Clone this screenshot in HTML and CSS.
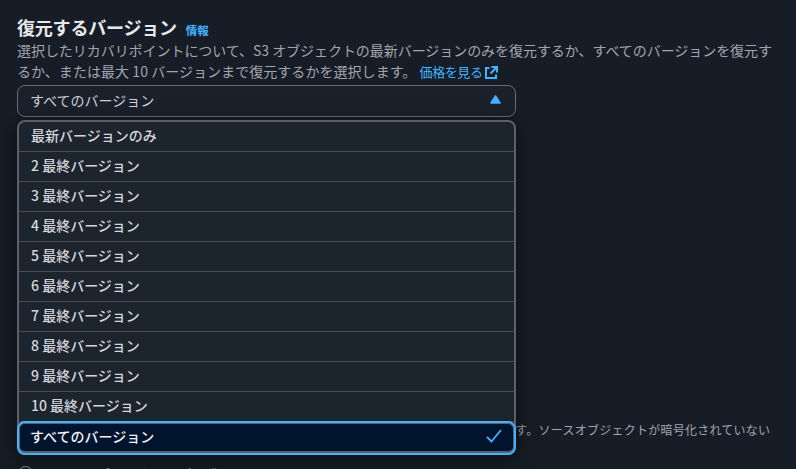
FILE: index.html
```html
<!DOCTYPE html>
<html lang="ja">
<head>
  <meta charset="UTF-8">
  <meta name="viewport" content="width=device-width, initial-scale=1.0">
  <title>復元するバージョン</title>
  <link rel="stylesheet" href="styles.css">
</head>
<body>
  <main class="field">
    <div class="field-head">
      <h2>復元するバージョン</h2>
      <a class="info" href="#">情報</a>
    </div>
    <p class="desc">
      <span class="line-one">選択したリカバリポイントについて、S3 オブジェクトの最新バージョンのみを復元するか、すべてのバージョンを復元す</span>
      <span class="line-two">るか、または最大 10 バージョンまで復元するかを選択します。</span>
      <a class="link" href="#">価格を見る<svg class="ext" width="13" height="13" viewBox="0 0 13 13" fill="none" stroke="#42b4ff" stroke-width="2"><path d="M4.5 2H1v10h10V8.5"/><path d="M6.5 1h5.5v5.5M12 1L5.5 7.5"/></svg></a>
    </p>

    <div class="select">
      <span>すべてのバージョン</span>
      <svg class="caret" width="11" height="9" viewBox="0 0 11 9" fill="#42b4ff" stroke="#42b4ff" stroke-width="1.5" stroke-linejoin="round"><path d="M5.5 1L10 8H1z"/></svg>
    </div>

    <ul class="menu">
      <li>最新バージョンのみ</li>
      <li>2 最終バージョン</li>
      <li>3 最終バージョン</li>
      <li>4 最終バージョン</li>
      <li>5 最終バージョン</li>
      <li>6 最終バージョン</li>
      <li>7 最終バージョン</li>
      <li>8 最終バージョン</li>
      <li>9 最終バージョン</li>
      <li>10 最終バージョン</li>
      <li class="selected">
        <span>すべてのバージョン</span>
        <svg width="16" height="14" viewBox="0 0 16 14" fill="none" stroke="#42b4ff" stroke-width="1.8"><path d="M1 8l4.5 4.5L15 1"/></svg>
      </li>
    </ul>

    <p class="behind">ます。ソースオブジェクトが暗号化されていない</p>
    <div class="radio"><span class="dot"></span>ソースオブジェクトの暗号化</div>
  </main>
</body>
</html>
```

FILE: styles.css
```css
html, body {
  height: 100%;
}
body {
  margin: 0;
  overflow: hidden;
  background: #161d26;
  color: #c6c6cd;
  font-family: "Noto Sans CJK JP", "Noto Sans", sans-serif;
  font-size: 14px;
}
.field {
  width: 779px;
  padding: 16px 0 0 17px;
}
.field-head {
  display: flex;
  align-items: baseline;
  gap: 9px;
}
h2 {
  margin: 0;
  font-size: 18px;
  line-height: 23px;
  font-weight: 700;
  letter-spacing: -0.2px;
  color: #e8e8ec;
}
.info {
  font-size: 11.5px;
  font-weight: 700;
  color: #42b4ff;
  text-decoration: none;
}
.desc {
  margin: 1px 0 0;
  font-size: 14px;
  line-height: 21px;
  color: #a4a4ae;
  white-space: nowrap;
}
.line-one {
  display: block;
  letter-spacing: -0.05px;
}
.line-two {
  letter-spacing: 0.05px;
}
.link {
  color: #42b4ff;
  text-decoration: none;
  font-size: 13px;
  letter-spacing: -0.4px;
}
.ext {
  margin-left: 2px;
  vertical-align: -2px;
}
.select {
  display: flex;
  justify-content: space-between;
  align-items: center;
  box-sizing: border-box;
  width: 499px;
  height: 32px;
  margin-top: 3px;
  padding: 0 14px 3px 12px;
  border: 1px solid #6b6b76;
  border-radius: 8px;
  background: #1a212b;
  color: #cfcfd5;
}
.menu {
  position: relative;
  z-index: 1;
  box-sizing: border-box;
  width: 499px;
  margin: 3px 0 0;
  padding: 0;
  list-style: none;
  background: #1c242e;
  border: 2px solid #5f5f6b;
  border-radius: 8px;
  box-shadow: 0 4px 20px rgba(0, 0, 0, 0.55);
}
.menu li {
  box-sizing: border-box;
  height: 30px;
  padding: 0 12px;
  line-height: 27px;
  color: #d5d5da;
  font-weight: 500;
  border-bottom: 1px solid #474c55;
}
.menu .selected {
  display: flex;
  justify-content: space-between;
  align-items: center;
  height: 34px;
  margin: -1px -2px -2px;
  padding: 0 12px 5px 11px;
  background: #00142e;
  border: 2px solid #42b4ff;
  border-radius: 8px;
  box-shadow: inset 0 0 0 1px #5f5f6b, inset 0 -2px 0 #5f5f6b;
  color: #f0f0f3;
  line-height: 24px;
}
.behind {
  position: absolute;
  left: 503px;
  top: 421px;
  margin: 0;
  font-size: 12px;
  letter-spacing: 0.25px;
  color: #a4a4ae;
  white-space: nowrap;
}
.radio {
  position: absolute;
  left: 18px;
  top: 464px;
  display: flex;
  align-items: flex-start;
  gap: 8px;
}
.dot {
  width: 13px;
  height: 13px;
  margin-top: 2px;
  border: 1px solid #8c8c94;
  border-radius: 50%;
}
```
